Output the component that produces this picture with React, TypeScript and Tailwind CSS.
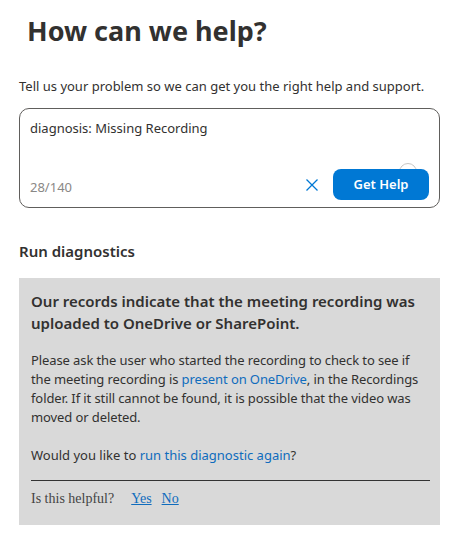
import React from "react";

export default function App() {
  return (
    <div className="w-[453px] h-[541px] bg-white text-[#323130] overflow-hidden" style={{ fontFamily: '"Noto Sans", "Open Sans", sans-serif' }}>
      <div className="pl-[19px] pr-[13px] pt-[13px]">
        <h1 className="pl-[8px] text-[27px] font-bold leading-[36px] text-[#323130]">How can we help?</h1>
        <p className="mt-[28px] text-[13px] leading-[18px]">Tell us your problem so we can get you the right help and support.</p>
        <div className="mt-[13px] h-[100px] rounded-[10px] border border-[#605e5c] px-[10px] pt-[10px] pb-[7px] flex flex-col justify-between">
          <div className="text-[13px] leading-[18px]">diagnosis: Missing Recording</div>
          <div className="flex items-center">
            <span className="text-[13px] text-[#8a8886] mt-[6px]">28/140</span>
            <div className="flex-1" />
            <svg width="14" height="14" viewBox="0 0 14 14" className="mr-[14px]">
              <path d="M1.5 1.5 L12.5 12.5 M12.5 1.5 L1.5 12.5" stroke="#0078d4" strokeWidth="1.3" fill="none" />
            </svg>
            <div className="relative">
              <div className="absolute right-[12px] top-[-6px] w-[18px] h-[18px] rounded-full border border-[#c8c6c4] bg-white flex items-center justify-center">
                <div className="w-[8px] h-[8px] rounded-full bg-[#2e7d4f] mt-[6px]" />
              </div>
              <button className="relative w-[96px] h-[31px] rounded-[8px] bg-[#0078d4] text-white text-[13px] font-semibold">Get Help</button>
            </div>
          </div>
        </div>
        <h2 className="mt-[33px] text-[15px] font-semibold leading-[20px]">Run diagnostics</h2>
        <div className="mt-[17px] bg-[#d9d9d9] pl-[12px] pr-[10px] pt-[12px] pb-[17px]">
          <div className="text-[15px] font-semibold leading-[22px]">Our records indicate that the meeting recording was uploaded to OneDrive or SharePoint.</div>
          <p className="mt-[17px] text-[13px] leading-[19px] tracking-[-0.1px]">
            Please ask the user who started the recording to check to see if the meeting recording is{" "}
            <a className="text-[#0f6cbd]">present on OneDrive</a>, in the Recordings folder. If it still cannot be found, it is possible that the video was moved or deleted.
          </p>
          <p className="mt-[19px] text-[13px] leading-[19px]">
            Would you like to <a className="text-[#0f6cbd]">run this diagnostic again</a>?
          </p>
          <div className="mt-[15px] border-t border-[#333]" />
          <div className="mt-[8px] flex text-[14px] leading-[19px] text-[#444]" style={{ fontFamily: '"Liberation Serif", serif' }}>
            <span>Is this helpful?</span>
            <a className="ml-[17px] text-[#0f6cbd] underline">Yes</a>
            <a className="ml-[10px] text-[#0f6cbd] underline">No</a>
          </div>
        </div>
      </div>
    </div>
  );
}
